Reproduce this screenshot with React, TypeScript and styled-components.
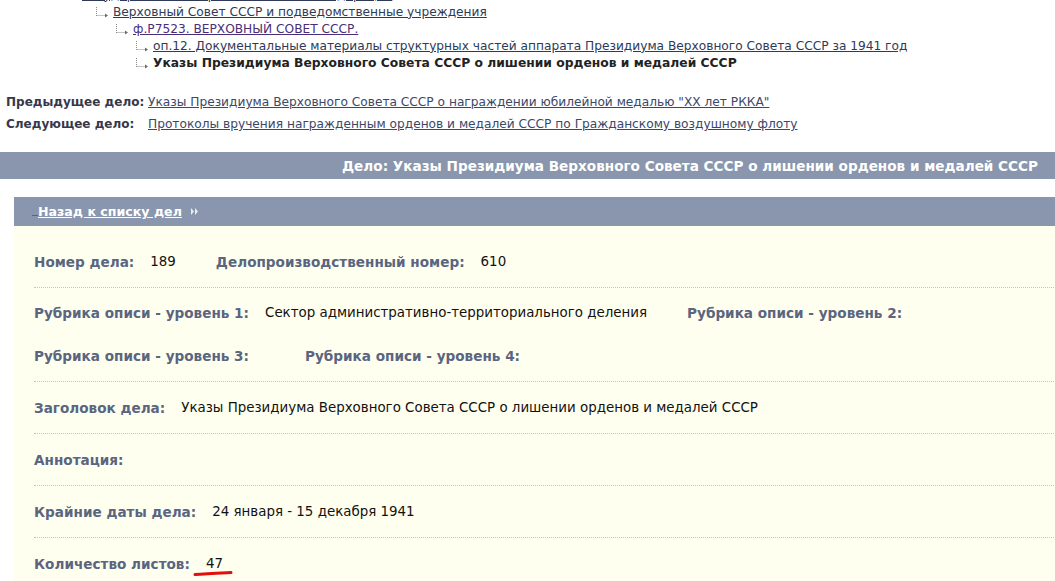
import React from "react"
import styled, { createGlobalStyle } from "styled-components"

const GlobalStyle = createGlobalStyle`
    html, body {
        margin: 0;
        padding: 0;
        background: #fff;
        overflow: hidden;
    }
    body {
        font-family: "DejaVu Sans", Verdana, sans-serif;
        font-size: 12px;
        color: #000;
    }
`

const Page = styled.div`
    width: 1055px;
    height: 581px;
    overflow: hidden;
`

const Tree = styled.div`
    margin-top: -14px;
    display: flex;
    flex-direction: column;
`

const TreeRow = styled.div<{ $indent: number }>`
    display: flex;
    align-items: center;
    height: 17px;
    padding-left: ${(p) => p.$indent}px;
    white-space: nowrap;
`

const TreeLink = styled.a<{ $visited?: boolean }>`
    color: ${(p) => (p.$visited ? "#4a2f78" : "#2e3a58")};
    text-decoration: underline;
    font-size: 12.2px;
`

const TreeCurrent = styled.span`
    font-weight: bold;
    color: #222;
    font-size: 12.3px;
`

const TreeIconBox = styled.span`
    display: inline-flex;
    width: 18px;
    flex: none;
`

const TreeIcon = () => (
    <TreeIconBox>
        <svg width="16" height="12" viewBox="0 0 16 12">
            <path d="M1.5 1v9M1.5 9.5h9" stroke="#8a8a8a" strokeWidth="1" strokeDasharray="1 1" fill="none" />
            <path d="M10 7.5l3 2-3 2z" fill="#6a6a6a" />
        </svg>
    </TreeIconBox>
)

const NavTable = styled.div`
    display: grid;
    grid-template-columns: 142px 1fr;
    row-gap: 6px;
    padding: 23px 0 0 6px;
    line-height: 16px;
`

const NavLabel = styled.span`
    font-weight: bold;
    color: #36384a;
`

const NavLink = styled.a`
    color: #3b4868;
    text-decoration: underline;
    font-size: 12.2px;
`

const HeaderBar = styled.div`
    margin-top: 20px;
    height: 27px;
    background: #8996ad;
    display: flex;
    align-items: center;
    justify-content: flex-end;
    padding-right: 17px;
    color: #fff;
    font-weight: bold;
    font-size: 13.6px;
`

const Panel = styled.div`
    margin: 18px 0 0 14px;
    width: 1060px;
`

const BackBar = styled.div`
    height: 29px;
    background: #8996ad;
    display: flex;
    align-items: center;
    justify-content: space-between;
    padding-left: 18px;
    padding-right: 10px;
`

const BackLink = styled.a`
    display: inline-flex;
    align-items: center;
    gap: 9px;
    color: #fff;
    font-weight: bold;
    font-size: 12.6px;
`

const BackText = styled.span`
    text-decoration: underline;
    &::before {
        content: " ";
        display: inline-block;
        width: 6px;
        border-bottom: 1px solid #3c6aa8;
    }
`

const EdgeDot = styled.span`
    width: 8px;
    height: 8px;
    border-radius: 4px;
    background: #fff;
    margin-right: -2px;
`

const Content = styled.div`
    background: #fffff0;
    padding: 10px 0 0 20px;
`

const Row = styled.div<{ $last?: boolean; $group?: boolean }>`
    display: flex;
    flex-direction: column;
    gap: 27px;
    padding: ${(p) => (p.$group ? "17px" : "18px")} 0 17px;
    border-bottom: ${(p) => (p.$last ? "none" : "1px dotted #c4c4c4")};
`

const Line = styled.div`
    display: flex;
    align-items: center;
    gap: 40px;
    height: 16px;
    white-space: nowrap;
`

const FieldBox = styled.div`
    display: flex;
    align-items: center;
    gap: 16px;
    line-height: 16px;
`

const Label = styled.span`
    font-weight: bold;
    color: #5a6580;
    font-size: 13.6px;
`

const Value = styled.span`
    color: #111;
    font-size: 13.4px;
    position: relative;
`

const RedMark = styled.svg`
    position: absolute;
    left: -13px;
    top: 13px;
`

const Field = ({ label, value, marked }: { label: string; value?: string; marked?: boolean }) => (
    <FieldBox>
        <Label>{label}</Label>
        <Value>
            {value ?? ""}
            {marked && (
                <RedMark width="40" height="8" viewBox="0 0 40 8">
                    <path d="M2 5.5C12 4.5 26 4 38 3.5" stroke="#e01010" strokeWidth="3" strokeLinecap="round" fill="none" />
                </RedMark>
            )}
        </Value>
    </FieldBox>
)

export default function App() {
    return (
        <Page>
            <GlobalStyle />
            <Tree>
                <TreeRow $indent={82}>
                    <TreeLink>Государственный архив Российской Федерации</TreeLink>
                </TreeRow>
                <TreeRow $indent={95}>
                    <TreeIcon />
                    <TreeLink>Верховный Совет СССР и подведомственные учреждения</TreeLink>
                </TreeRow>
                <TreeRow $indent={115}>
                    <TreeIcon />
                    <TreeLink $visited>ф.Р7523. ВЕРХОВНЫЙ СОВЕТ СССР.</TreeLink>
                </TreeRow>
                <TreeRow $indent={135}>
                    <TreeIcon />
                    <TreeLink>
                        оп.12. Документальные материалы структурных частей аппарата Президиума Верховного Совета СССР за 1941 год
                    </TreeLink>
                </TreeRow>
                <TreeRow $indent={135}>
                    <TreeIcon />
                    <TreeCurrent>Указы Президиума Верховного Совета СССР о лишении орденов и медалей СССР</TreeCurrent>
                </TreeRow>
            </Tree>

            <NavTable>
                <NavLabel>Предыдущее дело:</NavLabel>
                <NavLink>Указы Президиума Верховного Совета СССР о награждении юбилейной медалью "XX лет РККА"</NavLink>
                <NavLabel>Следующее дело:</NavLabel>
                <NavLink>Протоколы вручения награжденным орденов и медалей СССР по Гражданскому воздушному флоту</NavLink>
            </NavTable>

            <HeaderBar>Дело: Указы Президиума Верховного Совета СССР о лишении орденов и медалей СССР</HeaderBar>

            <Panel>
                <BackBar>
                    <BackLink>
                        <BackText>Назад к списку дел</BackText>
                        <svg width="8" height="7" viewBox="0 0 8 7">
                            <path d="M0 0l3 3.5L0 7zM4 0l3 3.5L4 7z" fill="#e8ecf4" />
                        </svg>
                    </BackLink>
                    <EdgeDot />
                </BackBar>
                <Content>
                    <Row>
                        <Line>
                            <Field label="Номер дела:" value="189" />
                            <Field label="Делопроизводственный номер:" value="610" />
                        </Line>
                    </Row>
                    <Row $group>
                        <Line>
                            <Field label="Рубрика описи - уровень 1:" value="Сектор административно-территориального деления" />
                            <Field label="Рубрика описи - уровень 2:" />
                        </Line>
                        <Line>
                            <Field label="Рубрика описи - уровень 3:" />
                            <Field label="Рубрика описи - уровень 4:" />
                        </Line>
                    </Row>
                    <Row>
                        <Line>
                            <Field
                                label="Заголовок дела:"
                                value="Указы Президиума Верховного Совета СССР о лишении орденов и медалей СССР"
                            />
                        </Line>
                    </Row>
                    <Row>
                        <Line>
                            <Field label="Аннотация:" />
                        </Line>
                    </Row>
                    <Row>
                        <Line>
                            <Field label="Крайние даты дела:" value="24 января - 15 декабря 1941" />
                        </Line>
                    </Row>
                    <Row $last>
                        <Line>
                            <Field label="Количество листов:" value="47" marked />
                        </Line>
                    </Row>
                </Content>
            </Panel>
        </Page>
    )
}
